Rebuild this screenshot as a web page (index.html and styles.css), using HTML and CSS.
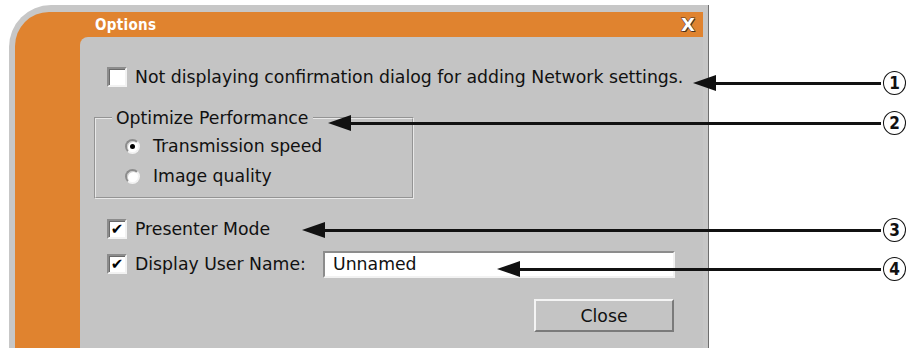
FILE: index.html
```html
<!DOCTYPE html>
<html>
  <head>
    <title>Options</title>
    <meta charset="UTF-8">
    <meta name="viewport" content="width=device-width, initial-scale=1.0">
    <link rel="stylesheet" href="styles.css">
  </head>
  <body>
    <div class="window">
      <div class="frame">
        <div class="titlebar">
          <span class="title">Options</span>
          <span class="close-x">X</span>
        </div>
        <div class="panel">
          <label class="row row-first">
            <span class="checkbox"></span>
            <span>Not displaying confirmation dialog for adding Network settings.</span>
          </label>
          <fieldset class="group">
            <legend>Optimize Performance</legend>
            <label class="radio-row">
              <span class="radio checked"></span>
              <span>Transmission speed</span>
            </label>
            <label class="radio-row">
              <span class="radio"></span>
              <span>Image quality</span>
            </label>
          </fieldset>
          <label class="row row-presenter">
            <span class="checkbox checked">&#10004;</span>
            <span>Presenter Mode</span>
          </label>
          <div class="row row-user">
            <span class="checkbox checked">&#10004;</span>
            <span class="user-label">Display User Name:</span>
            <span class="textbox">Unnamed</span>
          </div>
          <div class="buttons">
            <span class="button">Close</span>
          </div>
        </div>
      </div>
    </div>

    <!-- callouts drawn over the dialog -->
    <div class="callout" style="top: 83px; left: 693px;"><span class="head"></span><span class="line"></span><span class="num">1</span></div>
    <div class="callout" style="top: 123px; left: 328px;"><span class="head"></span><span class="line"></span><span class="num">2</span></div>
    <div class="callout" style="top: 230px; left: 302px;"><span class="head"></span><span class="line"></span><span class="num">3</span></div>
    <div class="callout" style="top: 269px; left: 497px;"><span class="head"></span><span class="line"></span><span class="num">4</span></div>
  </body>
</html>
```

FILE: styles.css
```css
body {
  margin: 0;
  padding: 0;
  background: #fff;
  height: 348px;
  overflow: hidden;
  position: relative;
  font-family: "DejaVu Sans", Verdana, sans-serif;
}
.window {
  margin: 5px 0 0 9px;
  width: 688px;
  height: 337px;
  padding: 7px 5px 6px 6px;
  background: #c7c7c7;
  border-right: 1px solid #6e6e6e;
  border-top-left-radius: 42px;
}
.frame {
  height: 100%;
  background: #e0832f;
  border-top-left-radius: 34px;
  display: flex;
  flex-direction: column;
}
.titlebar {
  height: 25px;
  display: flex;
  align-items: center;
  padding: 0 8px 0 80px;
}
.title {
  flex: 1;
  color: #fff;
  font-weight: bold;
  font-size: 15px;
  font-stretch: condensed;
  letter-spacing: 0.3px;
}
.close-x {
  color: #fff;
  font-weight: 900;
  font-size: 18px;
  line-height: 1;
  -webkit-text-stroke: 1px #4a3020;
  paint-order: stroke fill;
  text-shadow: 1px 1px 0 #4a3020;
}
.panel {
  flex: 1;
  margin-left: 65px;
  background: #c4c4c4;
  border-top-left-radius: 8px;
  display: flex;
  flex-direction: column;
  padding-left: 27px;
  font-size: 17.3px;
  color: #111;
}
.row {
  display: flex;
  align-items: center;
  height: 20px;
}
.row-first { margin-top: 30px; }
.row-presenter { margin-top: 20px; }
.row-user { margin-top: 15px; }
.checkbox {
  width: 16px;
  height: 16px;
  margin-right: 8px;
  background: #fff;
  border: 2px solid;
  border-color: #8c8c8c #f2f2f2 #f2f2f2 #8c8c8c;
  box-shadow: inset 1px 1px 0 #6a6a6a;
  display: flex;
  align-items: center;
  justify-content: center;
  font-size: 15px;
  font-weight: bold;
  line-height: 1;
  color: #000;
}
.group {
  margin: 21px 0 0 -13px;
  width: 287px;
  height: 84px;
  padding: 3px 0 0 29px;
  border: 2px groove #e8e8e8;
}
.group legend {
  margin-left: -13px;
  padding: 0 4px;
  line-height: 20px;
}
.radio-row {
  display: flex;
  align-items: center;
  height: 30px;
}
.radio {
  width: 11px;
  height: 11px;
  margin-right: 13px;
  border-radius: 50%;
  background: #fff;
  border: 2px solid;
  border-color: #8c8c8c #f2f2f2 #f2f2f2 #8c8c8c;
  box-shadow: inset 1px 1px 0 #d0d0d0;
  display: flex;
  align-items: center;
  justify-content: center;
}
.radio.checked::after {
  content: "";
  width: 5px;
  height: 5px;
  border-radius: 50%;
  background: #000;
}
.user-label {
  width: 188px;
}
.textbox {
  width: 340px;
  height: 23px;
  padding-left: 8px;
  background: #fff;
  border: 2px solid;
  border-color: #8c8c8c #f2f2f2 #f2f2f2 #8c8c8c;
  display: flex;
  align-items: center;
}
.buttons {
  display: flex;
  justify-content: flex-end;
  margin: 25px 29px 0 0;
}
.button {
  width: 136px;
  height: 29px;
  border: 2px solid;
  border-color: #f4f4f4 #7a7a7a #7a7a7a #f4f4f4;
  display: flex;
  align-items: center;
  justify-content: center;
  background: #c4c4c4;
}
.callout {
  position: absolute;
  right: 5px;
  display: flex;
  align-items: center;
  height: 0;
}
.callout .head {
  width: 0;
  height: 0;
  border-top: 8px solid transparent;
  border-bottom: 8px solid transparent;
  border-right: 23px solid #111;
}
.callout .line {
  flex: 1;
  height: 3px;
  background: #111;
}
.callout .num {
  width: 21px;
  height: 22px;
  margin-left: 2px;
  border: 1.5px solid #111;
  border-radius: 50%;
  display: flex;
  align-items: center;
  justify-content: center;
  font-size: 17px;
  font-weight: bold;
  font-stretch: condensed;
  color: #111;
}
```
